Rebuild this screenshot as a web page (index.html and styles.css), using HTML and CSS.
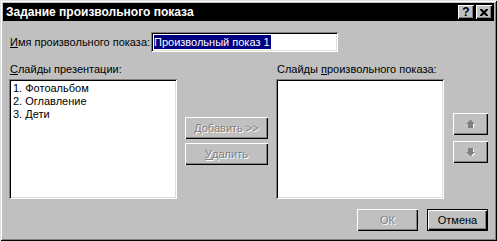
FILE: index.html
```html
<!DOCTYPE html>
<html lang="ru">
<head>
  <meta charset="UTF-8">
  <title>Задание произвольного показа</title>
  <link rel="stylesheet" href="styles.css">
</head>
<body>

  <div class="dialog">

    <!-- заголовок -->
    <div class="titlebar">
      <span class="title">Задание произвольного показа</span>
      <div class="caption-btns">
        <span class="cap-btn">?</span>
        <span class="cap-btn cap-close">
          <svg width="8" height="7" viewBox="0 0 8 7"><path d="M0 0h2l2 2 2-2h2v1l-2.5 2.5 2.5 2.5v1h-2l-2-2-2 2h-2v-1l2.5-2.5-2.5-2.5z" fill="#000"/></svg>
        </span>
      </div>
    </div>

    <div class="body">

      <div class="name-row">
        <label class="name-label"><u>И</u>мя произвольного показа:</label>
        <div class="field"><span class="sel">Произвольный показ 1</span></div>
      </div>

      <div class="main">
        <div class="col">
          <div class="caption"><u>С</u>лайды презентации:</div>
          <div class="list">
            <div>1. Фотоальбом</div>
            <div>2. Оглавление</div>
            <div>3. Дети</div>
          </div>
        </div>

        <div class="mid">
          <div class="btn disabled"><u>Д</u>обавить &gt;&gt;</div>
          <div class="btn disabled"><u>У</u>далить</div>
        </div>

        <div class="col">
          <div class="caption">Слайды <u>п</u>роизвольного показа:</div>
          <div class="list"></div>
        </div>

        <div class="arrows">
          <div class="btn arrow">
            <svg width="9" height="8" viewBox="0 0 9 8"><path d="M4 0h1l4 4h-2v4h-5v-4h-2z" fill="#fff" transform="translate(1 1)"/><path d="M4 0h1l4 4h-2v4h-5v-4h-2z" fill="#808080"/></svg>
          </div>
          <div class="btn arrow">
            <svg width="9" height="8" viewBox="0 0 9 8"><path d="M2 0h5v4h2l-4 4h-1l-4-4h2z" fill="#fff" transform="translate(1 1)"/><path d="M2 0h5v4h2l-4 4h-1l-4-4h2z" fill="#808080"/></svg>
          </div>
        </div>
      </div>

      <div class="footer">
        <div class="btn disabled ok">ОК</div>
        <div class="btn default">Отмена</div>
      </div>

    </div>
  </div>

</body>
</html>
```

FILE: styles.css
```css
*{
  box-sizing: border-box;
}

body{
  margin: 0;
  background: #c0c0c0;
  font-family: "Liberation Sans", Arial, sans-serif;
  font-size: 11px;
  color: #000;
}

u{
  text-decoration: underline;
  text-underline-offset: 1px;
}

.dialog{
  width: 497px;
  height: 241px;
  padding: 3px;
  background: #c0c0c0;
  box-shadow: inset 1px 1px 0 #dfdfdf, inset -1px -1px 0 #000,
              inset 2px 2px 0 #fff, inset -2px -2px 0 #808080;
  display: flex;
  flex-direction: column;
}

.titlebar{
  height: 18px;
  background: #000;
  color: #fff;
  display: flex;
  align-items: center;
  justify-content: space-between;
  padding: 0 2px 0 3px;
}

.title{
  font-weight: bold;
  font-size: 12px;
}

.caption-btns{
  display: flex;
  gap: 2px;
}

.cap-btn{
  width: 16px;
  height: 14px;
  background: #c0c0c0;
  color: #000;
  font-weight: bold;
  font-size: 12px;
  line-height: 14px;
  text-align: center;
  box-shadow: inset 1px 1px 0 #fff, inset -1px -1px 0 #000,
              inset -2px -2px 0 #808080;
}

.cap-close{
  display: flex;
  align-items: center;
  justify-content: center;
}

.body{
  flex: 1;
  padding: 11px 6px 0 6px;
}

.name-row{
  display: flex;
  align-items: center;
  padding-left: 1px;
}

.name-label{
  width: 141px;
}

.field{
  width: 187px;
  height: 20px;
  background: #fff;
  padding: 3px 3px 0 3px;
  box-shadow: inset 1px 1px 0 #808080, inset -1px -1px 0 #fff,
              inset 2px 2px 0 #000, inset -2px -2px 0 #dfdfdf;
}

.sel{
  background: #000080;
  color: #fff;
  padding: 1px 1px 1px 0;
  line-height: 14px;
}

.main{
  display: flex;
  margin-top: 11px;
}

.col{
  width: 168px;
}

.caption{
  height: 16px;
  padding-left: 1px;
}

.list{
  height: 120px;
  background: #fff;
  padding: 3px 4px;
  line-height: 13px;
  box-shadow: inset 1px 1px 0 #808080, inset -1px -1px 0 #fff,
              inset 2px 2px 0 #000, inset -2px -2px 0 #dfdfdf;
}

.mid{
  width: 83px;
  margin: 0 8px 0 8px;
  padding-top: 54px;
  display: flex;
  flex-direction: column;
  gap: 4px;
}

.btn{
  height: 22px;
  background: #c0c0c0;
  display: flex;
  align-items: center;
  justify-content: center;
  box-shadow: inset 1px 1px 0 #fff, inset -1px -1px 0 #000,
              inset -2px -2px 0 #808080;
}

.btn.disabled{
  color: #808080;
  text-shadow: 1px 1px 0 #fff;
}

.arrows{
  width: 35px;
  margin-left: 9px;
  padding-top: 50px;
  display: flex;
  flex-direction: column;
  gap: 6px;
}

.footer{
  display: flex;
  justify-content: flex-end;
  gap: 9px;
  margin-top: 10px;
}

.footer .btn{
  width: 61px;
}

.btn.default{
  box-shadow: inset 0 0 0 1px #000, inset 2px 2px 0 #fff,
              inset -2px -2px 0 #000, inset -3px -3px 0 #808080;
}
```
